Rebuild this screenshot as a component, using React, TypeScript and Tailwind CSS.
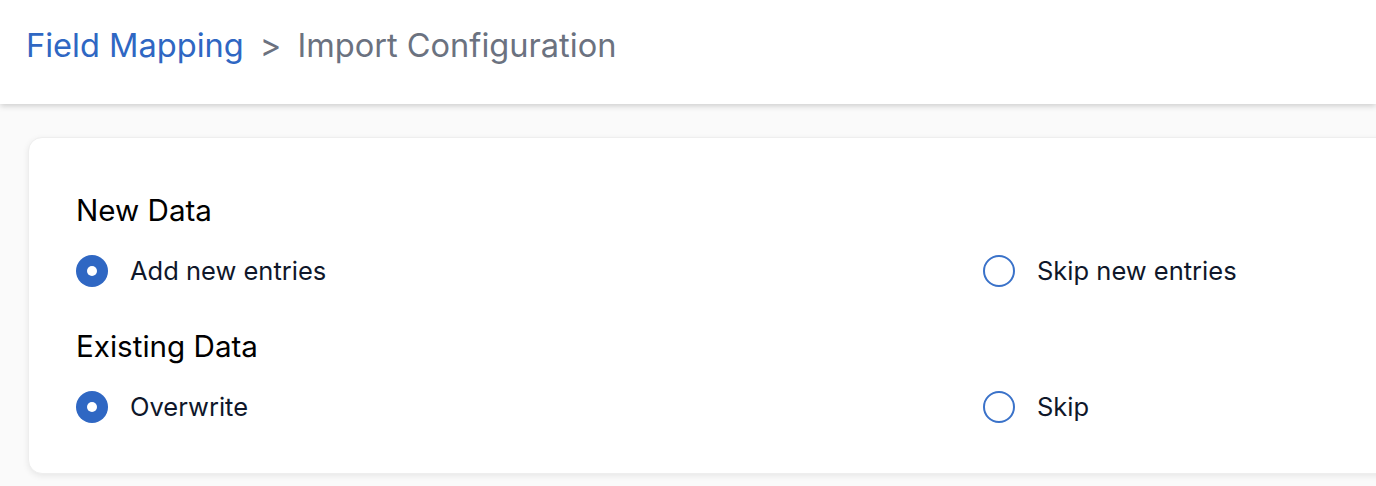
import React from "react";

function Radio({ checked, label }: { checked: boolean; label: string }) {
  return (
    <label className="flex items-center gap-[22px] h-[40px]">
      {checked ? (
        <span className="w-[32px] h-[32px] rounded-full bg-[#2f67c3] flex items-center justify-center shrink-0">
          <span className="w-[10px] h-[10px] rounded-full bg-white" />
        </span>
      ) : (
        <span className="w-[32px] h-[32px] rounded-full border-2 border-[#3a72c9] bg-white shrink-0" />
      )}
      <span className="text-[25.5px] text-[#0f172a] leading-none">{label}</span>
    </label>
  );
}

function Section({ title, a, b }: { title: string; a: string; b: string }) {
  return (
    <div className="flex flex-col">
      <h2 className="text-[29.6px] text-black leading-[36px] font-normal">{title}</h2>
      <div className="grid grid-cols-[907px_1fr] mt-[23px]">
        <Radio checked label={a} />
        <Radio checked={false} label={b} />
      </div>
    </div>
  );
}

export default function App() {
  return (
    <div
      className="w-[1376px] h-[486px] overflow-hidden bg-[#fafafa]"
      style={{ fontFamily: "Inter, 'Noto Sans', sans-serif" }}
    >
      <header className="h-[104px] bg-white shadow-[0_2px_6px_rgba(0,0,0,0.18)] flex items-start pt-[21px] pl-[26px] relative z-10">
        <nav className="flex items-center text-[32.6px] leading-[48px]">
          <span className="text-[#2f67c3]">Field Mapping</span>
          <span className="text-[#6b7280] mx-[16px]">&gt;</span>
          <span className="text-[#6b7280]">Import Configuration</span>
        </nav>
      </header>
      <main className="pt-[33px] pl-[28px]">
        <div className="w-[1900px] h-[337px] bg-white rounded-[14px] border border-[#eeeeee] shadow-[0_2px_6px_rgba(0,0,0,0.08)] pl-[47px] pt-[54px] flex flex-col gap-[37px]">
          <Section title="New Data" a="Add new entries" b="Skip new entries" />
          <Section title="Existing Data" a="Overwrite" b="Skip" />
        </div>
      </main>
    </div>
  );
}
